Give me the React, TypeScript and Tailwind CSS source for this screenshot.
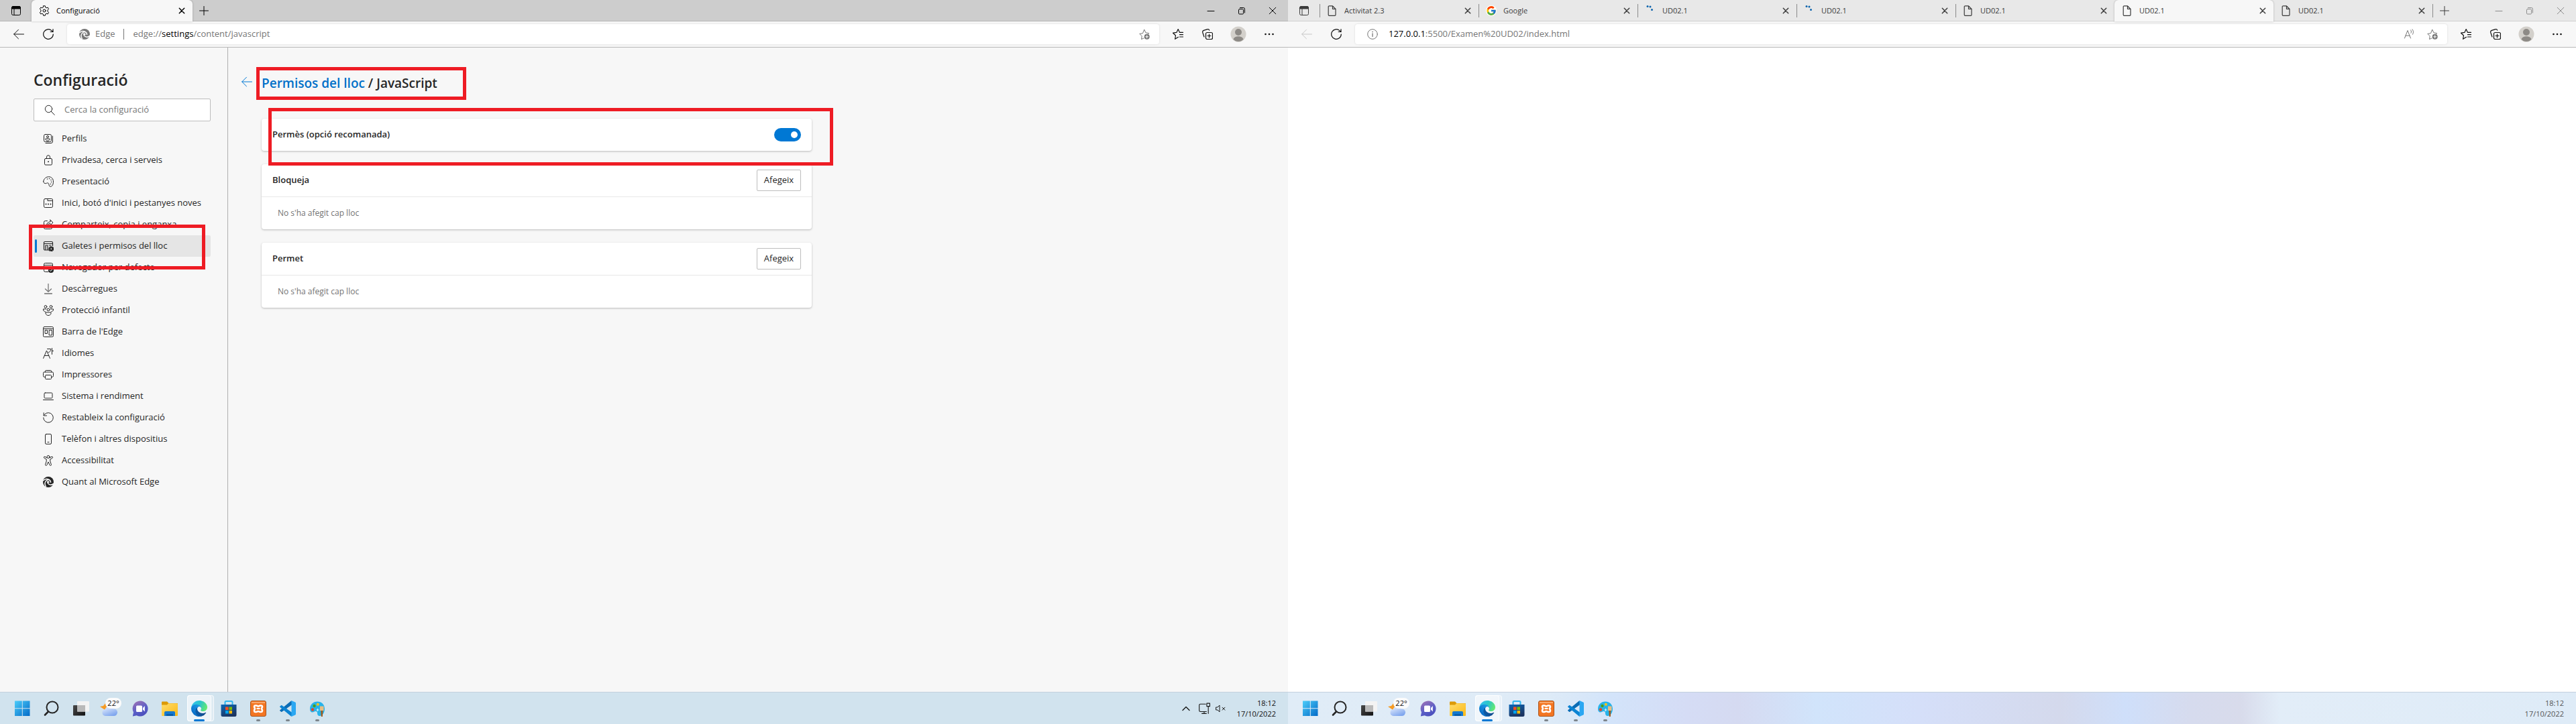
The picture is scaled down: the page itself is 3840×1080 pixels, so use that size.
import React, { useId } from "react";
import { FcGoogle } from "react-icons/fc";

type IconProps = { className?: string };

function Line({ className = "size-4", children }: IconProps & { children: React.ReactNode }) {
  return (
    <svg viewBox="0 0 16 16" className={className} fill="none" stroke="currentColor" strokeWidth="1" strokeLinecap="round" strokeLinejoin="round" aria-hidden="true">
      {children}
    </svg>
  );
}

/* ---------- browser chrome icons ---------- */

const TabActions = () => (
  <Line>
    <rect x="1.5" y="1.5" width="13" height="13" rx="2" />
    <path d="M1.5 3.5a2 2 0 0 1 2-2h9a2 2 0 0 1 2 2v1.5h-13z" fill="currentColor" />
    <path d="M5 5v9.5" />
  </Line>
);
const Gear = () => (
  <Line>
    <circle cx="8" cy="8" r="2" />
    <path d="M6.7.8h2.6l.5 2.2 1.3.8 2.2-.7 1.3 2.3-1.6 1.6v2l1.6 1.6-1.3 2.3-2.2-.7-1.3.8-.5 2.2H6.7L6.200 13l-1.300-.8-2.200.7-1.300-2.300L3 9V7L1.400 5.400l1.300-2.300 2.200.7L6.200 3z" />
  </Line>
);
const Close = ({ className = "size-4" }: IconProps) => (
  <Line className={className}>
    <path d="M4.300 4.300l7.400 7.400M11.700 4.300l-7.400 7.400" strokeWidth="1.500" />
  </Line>
);
const Plus = () => (
  <Line>
    <path d="M8 1.500v13M1.500 8h13" />
  </Line>
);
const FileIcon = () => (
  <Line>
    <path d="M3.500.8h5l4.500 4.500v8.700a1.300 1.300 0 0 1-1.300 1.300H3.500A1.300 1.300 0 0 1 2.200 14V2.100A1.300 1.300 0 0 1 3.500.8zM8.500.8v4.500H13" strokeWidth="1.200" />
  </Line>
);
const Loading = () => (
  <svg viewBox="0 0 16 16" className="size-4" fill="#0f65ad" aria-hidden="true">
    <circle cx="4" cy="1.500" r="1.500" />
    <circle cx="8" cy="2" r="1.500" />
    <circle cx="10.500" cy="6.500" r="1.500" />
  </svg>
);
const ArrowLeft = ({ className }: IconProps) => (
  <Line className={className}>
    <path d="M15.500 8H.7M7.500 1.200L.7 8l6.800 6.800" />
  </Line>
);
const Refresh = () => (
  <Line>
    <path d="M15.300 8A7.300 7.300 0 1 1 12.900 2.600L15 4.500M15 .700v3.800h-3.800" strokeWidth="1.200" />
  </Line>
);
const Swirl = () => (
  <svg viewBox="0 0 16 16" className="size-4" aria-hidden="true">
    <circle cx="8" cy="8" r="8" fill="currentColor" />
    <g fill="none" stroke="white" strokeWidth="1.400">
      <path d="M.2 6.200C2.500 3.600 5.800 3 8.500 4.200c2.200 1 3.300 2.800 3 4.800" />
      <path d="M3.300 14.600C1.900 10.800 3 7.300 5.900 5.700c1.500-.8 3.500-.700 4.800.300" transform="rotate(-12 6 9)" />
      <path d="M15.900 10.300c-2.500 2.300-5.300 2.500-7.500.700-1.600-1.300-1.900-3.200-.9-4.500" />
    </g>
    <circle cx="8.300" cy="8" r="1.300" fill="white" />
  </svg>
);
const Info = () => (
  <Line>
    <circle cx="8" cy="8" r="7.300" />
    <path d="M8 7v4.500" strokeWidth="1.300" />
    <circle cx="8" cy="4.600" r=".4" fill="currentColor" />
  </Line>
);
const StarAdd = () => (
  <Line>
    <path d="M7 14l-3.500 1.500.7-4.700L.800 7.400l4.700-.7L7.700 1l2.200 4.800 4.800.8-2 2" />
    <circle cx="11.700" cy="11.800" r="4" fill="currentColor" stroke="none" />
    <path d="M11.700 9.800v4M9.700 11.800h4" stroke="white" />
  </Line>
);
const ReadAloud = () => (
  <Line>
    <path d="M1.500 14L6 2.500 10.500 14M3 10.200h6M10.500 1.800c1.200 1.300 1.200 3 .5 4.500M13 .800c1.900 2.200 2 5 .5 7.500" />
  </Line>
);
const Favorites = () => (
  <Line>
    <path d="M8.500 12.300l-4.900 3 .9-5.300L.600 6.200l5.300-.8L8.200.600l2.300 4.800h5M10.500 8.700h5M10.500 12h5" strokeWidth="1.200" />
  </Line>
);
const Collections = () => (
  <Line>
    <rect x="5.500" y="5.500" width="10" height="10" rx="2" strokeWidth="1.200" />
    <path d="M10.500 8v5M8 10.500h5M3 12L.800 5.500C.400 4 1 2.900 2.300 2.400L8 .600c1.300-.3 2.300.300 2.700 1.500" strokeWidth="1.200" />
  </Line>
);
const Avatar = () => (
  <svg viewBox="0 0 24 24" className="size-6" aria-hidden="true">
    <circle cx="12" cy="12" r="11.500" fill="#d3d0cb" />
    <circle cx="12" cy="9" r="5" fill="#8d8a86" />
    <path d="M4.500 19.500c1-3 4-4.200 7.500-4.200s6.500 1.200 7.500 4.200C17.500 22 15 23 12 23s-5.500-1-7.500-3.500z" fill="#8d8a86" />
  </svg>
);
const Dots = () => (
  <svg viewBox="0 0 16 16" className="size-4" fill="currentColor" aria-hidden="true">
    <circle cx="2.500" cy="8" r="1.300" />
    <circle cx="8" cy="8" r="1.300" />
    <circle cx="13.500" cy="8" r="1.300" />
  </svg>
);
const Minimize = () => (
  <Line>
    <path d="M3 8.500h10" />
  </Line>
);
const Restore = () => (
  <Line>
    <rect x="3.500" y="5.500" width="7" height="7.500" rx="1.200" />
    <path d="M5.500 3.500h5a2 2 0 0 1 2 2v5.500" />
  </Line>
);
const WinClose = () => (
  <Line>
    <path d="M3.200 3.200l9.600 9.600M12.800 3.200l-9.600 9.600" />
  </Line>
);
const Search = () => (
  <Line>
    <circle cx="6.500" cy="6.500" r="5.200" />
    <path d="M10.300 10.300l5 5" />
  </Line>
);

/* ---------- settings menu ---------- */

const menu: { label: string; icon: React.ReactNode }[] = [
  {
    label: "Perfils",
    icon: (
      <Line>
        <rect x="1.500" y="1.500" width="11" height="11" rx="2" />
        <path d="M14.500 4v8a2.500 2.500 0 0 1-2.500 2.500H4" />
        <circle cx="7" cy="5" r="1.500" />
        <path d="M4 8h6v1c0 1.200-1.200 2-3 2s-3-.8-3-2z" />
      </Line>
    ),
  },
  {
    label: "Privadesa, cerca i serveis",
    icon: (
      <Line>
        <rect x="2.500" y="5.500" width="11" height="9.500" rx="1.500" />
        <path d="M5.500 5.500V3.200a2.500 2.500 0 0 1 5 0v2.300" />
        <circle cx="8" cy="10.200" r=".5" fill="currentColor" />
      </Line>
    ),
  },
  {
    label: "Presentació",
    icon: (
      <Line>
        <path d="M.700 7.500C1.500 3.200 4.800.700 8.700.700c4 0 6.800 2.900 6.800 7.300s-1.800 7.300-4.200 7.300c-3.200 0-1.600-4.300-3.500-5.200-1.700-.8-2.900 1.100-4.700.5C1.500 10.100.4 9 .7 7.500z" />
        <path d="M6.500 4h.1M9.500 3.500h.1M12 5.500h.1M12.500 8.500h.1M11.500 11.500h.1" strokeWidth="1.400" />
      </Line>
    ),
  },
  {
    label: "Inici, botó d'inici i pestanyes noves",
    icon: (
      <Line>
        <rect x="1.500" y="1.500" width="13" height="13" rx="1.800" />
        <path d="M7 1.500v3h7.500" />
        <path d="M4.500 9.500h.1M8 9.500h.1M11.500 9.500h.1" strokeWidth="1.800" />
      </Line>
    ),
  },
  {
    label: "Comparteix, copia i enganxa",
    icon: (
      <Line>
        <path d="M6.500 2.500h-3a2 2 0 0 0-2 2v8a2 2 0 0 0 2 2h8a2 2 0 0 0 2-2v-2" />
        <path d="M11 1l4 4-4 4V6.500c-2.500 0-4.500 1-6 3.500.2-3.500 2.500-6 6-6.300z" />
      </Line>
    ),
  },
  {
    label: "Galetes i permisos del lloc",
    icon: (
      <Line>
        <path d="M9 14H3a1.500 1.500 0 0 1-1.500-1.500V3A1.500 1.500 0 0 1 3 1.500h10A1.500 1.500 0 0 1 14.500 3v4.500M1.500 4.500h13M4 7h3v7H4zM9.500 7h2.500" strokeWidth="1.200" />
        <circle cx="12.300" cy="12.300" r="3" fill="currentColor" stroke="none" />
        <circle cx="12.300" cy="12.300" r="3.400" strokeDasharray="1.800 1.760" strokeWidth="1.400" />
        <circle cx="12.300" cy="12.300" r="1" fill="#e5e5e5" stroke="none" />
      </Line>
    ),
  },
  {
    label: "Navegador per defecte",
    icon: (
      <Line>
        <path d="M8 14.500H3.500a2 2 0 0 1-2-2v-9a2 2 0 0 1 2-2h9a2 2 0 0 1 2 2v4M1.500 4.500h13" />
        <circle cx="12" cy="12" r="4" fill="currentColor" stroke="none" />
        <path d="M10.200 12.200l1.300 1.300 2.500-2.800" stroke="white" />
      </Line>
    ),
  },
  {
    label: "Descàrregues",
    icon: (
      <Line>
        <path d="M8 .500v11.500M3.500 8L8 12.300 12.500 8" stroke="#777" strokeWidth="1.300" />
        <path d="M2.500 15h11" />
      </Line>
    ),
  },
  {
    label: "Protecció infantil",
    icon: (
      <Line>
        <circle cx="4" cy="2.500" r="1.900" />
        <circle cx="12" cy="2.500" r="1.900" />
        <circle cx="8" cy="7" r="1.900" />
        <path d="M4.500 6H.5v1c0 1.600 1.300 2.700 3 2.900M11.500 6h4v1c0 1.600-1.300 2.700-3 2.900M4 11h8v1.200c0 2-1.700 3.300-4 3.300s-4-1.300-4-3.300z" />
      </Line>
    ),
  },
  {
    label: "Barra de l'Edge",
    icon: (
      <Line>
        <rect x=".5" y=".5" width="15" height="15" rx="1.800" />
        <path d="M.5 3.500h15" />
        <rect x="3.500" y="5.500" width="3" height="5" />
        <rect x="9.500" y="5.500" width="4" height="7.500" />
      </Line>
    ),
  },
  {
    label: "Idiomes",
    icon: (
      <Line>
        <path d="M.600 15.500L5.500 4l5 11.500M2.300 11.500h6.500M6.500 1.500h5.200c.2 2.800-1 4.500-3.700 5.200M13.500.500v9M13.500 4.500h2" />
      </Line>
    ),
  },
  {
    label: "Impressores",
    icon: (
      <Line>
        <path d="M3.500 4V2.500a1 1 0 0 1 1-1h7a1 1 0 0 1 1 1V4M3.500 11.500h-1a2 2 0 0 1-2-2V5.500A1.500 1.500 0 0 1 2 4h12a1.500 1.500 0 0 1 1.500 1.500v4a2 2 0 0 1-2 2h-1" />
        <rect x="3.500" y="8.500" width="9" height="6" rx="1" />
      </Line>
    ),
  },
  {
    label: "Sistema i rendiment",
    icon: (
      <Line>
        <rect x="2" y="3" width="12" height="8" rx="1.300" />
        <path d="M.500 13.500h15" />
      </Line>
    ),
  },
  {
    label: "Restableix la configuració",
    icon: (
      <Line>
        <path d="M.700 8A7.300 7.300 0 1 0 2.500 3.200L1 4.800M1.200.800V5h4.300" />
      </Line>
    ),
  },
  {
    label: "Telèfon i altres dispositius",
    icon: (
      <Line>
        <rect x="3.500" y=".6" width="9" height="14.800" rx="1.500" />
        <path d="M7 12.500h2" />
      </Line>
    ),
  },
  {
    label: "Accessibilitat",
    icon: (
      <Line>
        <circle cx="8" cy="2.500" r="2" />
        <path d="M6 3.800L3 2.300C1.200 1.700.700 3.900 2.200 4.600L5.200 6v3L3.600 14c-.4 1.700 1.700 2.200 2.200.800L8 10l2.200 4.800c.5 1.400 2.600.9 2.200-.8L10.800 9V6l3-1.400c1.500-.7 1-2.900-.8-2.300l-3 1.500" />
      </Line>
    ),
  },
  { label: "Quant al Microsoft Edge", icon: <Swirl /> },
];

/* ---------- taskbar icons ---------- */

function EdgeLogo() {
  const id = useId();
  return (
    <svg viewBox="0 0 256 256" className="size-6" aria-hidden="true">
      <defs>
        <linearGradient id={id + "a"} x1="0.2" y1="0.5" x2="1" y2="0.6">
          <stop offset="0" stopColor="#0c59a4" />
          <stop offset="1" stopColor="#114a8b" />
        </linearGradient>
        <linearGradient id={id + "b"} x1="0.9" y1="0.2" x2="0.3" y2="1">
          <stop offset="0" stopColor="#1b9de2" />
          <stop offset="0.5" stopColor="#1383d8" />
          <stop offset="1" stopColor="#0667c0" />
        </linearGradient>
        <linearGradient id={id + "c"} x1="0" y1="0.3" x2="1" y2="0.6">
          <stop offset="0" stopColor="#35c1f1" />
          <stop offset="0.5" stopColor="#2cc6c8" />
          <stop offset="1" stopColor="#66eb6e" />
        </linearGradient>
      </defs>
      <g transform="translate(-4.600 -4.900)">
        <path fill={`url(#${id}a)`} d="M235.680 195.460a93.730 93.730 0 0 1-10.540 4.710 101.870 101.870 0 0 1-35.900 6.460c-47.320 0-88.540-32.550-88.540-74.320A31.480 31.480 0 0 1 117.130 105c-42.800 1.800-53.800 46.400-53.800 72.530 0 73.880 68.090 81.370 82.760 81.370 7.910 0 19.840-2.300 27-4.560l1.310-.44a128.340 128.340 0 0 0 66.600-52.800 4 4 0 0 0-5.320-5.640z" />
        <path fill={`url(#${id}b)`} d="M110.340 246.340A79.200 79.200 0 0 1 87.600 225a80.720 80.720 0 0 1 29.530-120c3.120-1.470 8.450-4.130 15.540-4a32.350 32.350 0 0 1 25.690 13 31.880 31.880 0 0 1 6.360 18.660c0-.21 24.460-79.600-80-79.600-43.900 0-80 41.660-80 78.210a130.150 130.150 0 0 0 12.110 56 128 128 0 0 0 156.380 67.110 75.550 75.550 0 0 1-62.780-8z" />
        <path fill={`url(#${id}c)`} d="M156.940 153.780c-.81 1.050-3.300 2.500-3.300 5.660 0 2.610 1.700 5.120 4.720 7.230 14.380 10 41.490 8.680 41.560 8.680a59.560 59.560 0 0 0 30.270-8.350 61.380 61.380 0 0 0 30.430-52.880c.26-22.410-8-37.310-11.340-43.910-21.190-41.450-66.930-65.290-116.670-65.290a128 128 0 0 0-128 126.200c.48-36.540 36.800-66.050 80-66.050 3.500 0 23.460.34 42 10.070 16.340 8.580 24.900 18.940 30.850 29.210 6.180 10.670 7.280 24.150 7.280 29.520s-2.740 13.330-7.800 19.910z" />
      </g>
    </svg>
  );
}

function StartLogo() {
  const id = useId();
  return (
    <svg viewBox="0 0 24 24" className="size-6" aria-hidden="true">
      <defs>
        <linearGradient id={id} gradientUnits="userSpaceOnUse" x1="0" y1="0" x2="24" y2="24">
          <stop offset="0" stopColor="#4fd0fb" />
          <stop offset="1" stopColor="#0067c6" />
        </linearGradient>
      </defs>
      <path fill={`url(#${id})`} d="M1 .5h10.800v10.800H1zM12.800.5H23.500v10.800H12.800zM1 12.300h10.800V23H1zM12.800 12.300H23.500V23H12.800z" />
    </svg>
  );
}

const TaskSearch = () => (
  <svg viewBox="0 0 24 24" className="size-6" fill="none" stroke="#262626" strokeLinecap="round" aria-hidden="true">
    <circle cx="13" cy="10" r="8.500" strokeWidth="2" />
    <path d="M6.500 17L2 21.500" strokeWidth="2.600" />
  </svg>
);

function TaskView() {
  const id = useId();
  return (
    <svg viewBox="0 0 24 24" className="size-6" aria-hidden="true">
      <defs>
        <linearGradient id={id} x1="0" y1="0" x2="1" y2="1">
          <stop offset="0" stopColor="#4a4a4a" />
          <stop offset="1" stopColor="#111" />
        </linearGradient>
      </defs>
      <rect x="0" y="7" width="18" height="15.500" rx="1" fill={`url(#${id})`} />
      <rect x="6" y="1" width="18" height="15.500" rx="1" fill="#f3f3f3" />
      <rect x="6" y="7" width="12" height="9.500" fill="#b9b9b9" />
    </svg>
  );
}

function Weather() {
  const id = useId();
  return (
    <svg viewBox="0 0 32 28" className="-mt-1 h-7 w-8" aria-hidden="true">
      <defs>
        <linearGradient id={id} x1="0" y1="0" x2="0.600" y2="1">
          <stop offset="0" stopColor="#eef4fe" />
          <stop offset="1" stopColor="#7fa6ee" />
        </linearGradient>
      </defs>
      <path d="M0 13l5-1 4-5 5 4v7l-6 4-2-5z" fill="#f59a23" />
      <path d="M8 27a5 5 0 0 1-.4-9.900 6.500 6.500 0 0 1 12.200-.6 5.300 5.300 0 1 1 .7 10.500z" fill={`url(#${id})`} />
      <rect x="8" y="0" width="24" height="16" rx="8" fill="#fbfbfb" />
      <text x="20" y="12" fontSize="11" textAnchor="middle" fill="#111" fontFamily="Open Sans, sans-serif">22°</text>
    </svg>
  );
}

function ChatLogo() {
  const id = useId();
  return (
    <svg viewBox="0 0 24 24" className="size-6" aria-hidden="true">
      <defs>
        <linearGradient id={id} x1="0.100" y1="0" x2="0.600" y2="1">
          <stop offset="0" stopColor="#a273b4" />
          <stop offset="0.600" stopColor="#5b5fc7" />
          <stop offset="1" stopColor="#4b4fbd" />
        </linearGradient>
      </defs>
      <path d="M12 .5a11.500 11.500 0 1 1-5.300 21.700L.8 23.500 2 17.500A11.500 11.500 0 0 1 12 .5z" fill={`url(#${id})`} />
      <rect x="6" y="7.500" width="9" height="9.500" rx="1.500" fill="white" />
      <path d="M16 11l2.800-3v8.500L16 13.500z" fill="white" />
    </svg>
  );
}

function FolderLogo() {
  const id = useId();
  return (
    <svg viewBox="0 0 24 24" className="size-6" aria-hidden="true">
      <defs>
        <linearGradient id={id} x1="0" y1="0" x2="1" y2="1">
          <stop offset="0" stopColor="#ffdc6b" />
          <stop offset="1" stopColor="#fbb917" />
        </linearGradient>
      </defs>
      <path d="M0 2.500a1 1 0 0 1 1-1h7l2.500 2.500H23a1 1 0 0 1 1 1v5H0z" fill="#dc9a07" />
      <path d="M0 6.500h8l2-2.300h13a1 1 0 0 1 1 1V22a1 1 0 0 1-1 1H1a1 1 0 0 1-1-1z" fill={`url(#${id})`} />
      <path d="M4 18a2 2 0 0 1 2-2h12a2 2 0 0 1 2 2v5H4z" fill="#1479cf" />
      <path d="M7 20h10v3H7z" fill="#0a5ea8" />
    </svg>
  );
}

function StoreLogo() {
  const id = useId();
  return (
    <svg viewBox="0 0 24 24" className="size-6" aria-hidden="true">
      <defs>
        <linearGradient id={id} x1="0" y1="0" x2="0.500" y2="1">
          <stop offset="0" stopColor="#0d67b8" />
          <stop offset="1" stopColor="#1c3561" />
        </linearGradient>
      </defs>
      <path d="M6.500 7V2.500A1.500 1.500 0 0 1 8 1h8a1.500 1.500 0 0 1 1.500 1.500V7" fill="none" stroke="#2fb4ee" strokeWidth="2" />
      <path d="M.5 6h23v15.500a2.500 2.500 0 0 1-2.500 2.500H3A2.500 2.500 0 0 1 .5 21.500z" fill={`url(#${id})`} />
      <path d="M7 9.500h4.500V14H7z" fill="#f25022" />
      <path d="M12.500 9.500H17V14h-4.500z" fill="#7fba00" />
      <path d="M7 15h4.500v4.500H7z" fill="#00a4ef" />
      <path d="M12.500 15H17v4.500h-4.500z" fill="#ffb900" />
    </svg>
  );
}

const XamppLogo = () => (
  <svg viewBox="0 0 24 24" className="size-6" aria-hidden="true">
    <rect x=".5" y=".5" width="23" height="23" rx="2.500" fill="#f37623" stroke="#a9561f" />
    <path d="M2 2h20v2H2z" fill="#f9a76b" />
    <path
      d="M7.500 7.500h1.500c1.500 0 2 1 3 1s1.500-1 3-1h1c1.500 0 2 1 2 2s-1 1.500-1 2.500 1 1.500 1 2.800-.8 2.200-2 2.200h-1c-1.500 0-2-1-3-1s-1.500 1-3 1H7.500c-1 0-1.500-1-1.500-2.200S7 13 7 12s-1-1.500-1-2.500.5-2 1.500-2z"
      fill="none"
      stroke="white"
      strokeWidth="2.600"
    />
    <path d="M9.500 12h5" stroke="white" strokeWidth="2.200" />
  </svg>
);

const CodeLogo = () => (
  <svg viewBox="0 0 24 24" className="size-6" aria-hidden="true">
    <path d="M.3 14.200a.8.800 0 0 0 0 1.100L2 16.800c.4.300.9.300 1.300 0L18.500 6 17.500 0z" fill="#0b6cb5" />
    <path d="M.3 9.800a.8.800 0 0 1 0-1.100L2 7.200c.4-.3.900-.3 1.300 0L18.500 18l-1 6z" fill="#0b83d3" />
    <path d="M17.500 0L23 2.500c.6.300 1 .8 1 1.500v16c0 .7-.4 1.200-1 1.500L17.500 24z" fill="#2aa7f2" />
  </svg>
);

const PaintLogo = () => (
  <svg viewBox="0 0 24 24" className="size-6" aria-hidden="true">
    <path d="M12 1.500c6.500 0 11 4.500 11 11 0 5-3 10.500-7.500 10.500-3 0-3.500-2.500-3.500-4.500 0-1.700-1-2.500-2.500-2.500-2 0-2.500 1.500-5 1.500S1 15 1 12.500C1 6 6 1.500 12 1.500z" fill="#27b3ea" />
    <circle cx="5" cy="13.500" r="2.200" fill="#d8482f" />
    <circle cx="7.500" cy="8" r="2.200" fill="#4c9f1e" />
    <circle cx="12.800" cy="5.800" r="2" fill="#fcc419" />
    <path d="M10.500 14h4M12.500 12v4" stroke="#d4f0fb" strokeWidth="1.200" />
    <path d="M16 8.500h5.500V15H16z" fill="#e9bd83" />
    <path d="M17.300 15h3l-.5 9h-2z" fill="#a05a1c" />
  </svg>
);

type Task = { name: string; icon: React.ReactNode; state?: "open" | "active" };
const tasks: Task[] = [
  { name: "Inici", icon: <StartLogo /> },
  { name: "Cerca", icon: <TaskSearch /> },
  { name: "Visualització de tasques", icon: <TaskView /> },
  { name: "El temps", icon: <Weather /> },
  { name: "Xat", icon: <ChatLogo /> },
  { name: "Explorador de fitxers", icon: <FolderLogo /> },
  { name: "Microsoft Edge", icon: <EdgeLogo />, state: "active" },
  { name: "Microsoft Store", icon: <StoreLogo /> },
  { name: "XAMPP", icon: <XamppLogo />, state: "open" },
  { name: "Visual Studio Code", icon: <CodeLogo />, state: "open" },
  { name: "Paint", icon: <PaintLogo />, state: "open" },
];

function Taskbar({ tray, background }: { tray?: boolean; background: string }) {
  return (
    <footer className={`flex h-12 shrink-0 items-stretch border-t border-[#c3d0de] pl-[11px] ${background}`}>
      {tasks.map((t) => (
        <button key={t.name} type="button" aria-label={t.name} className="relative flex w-11 items-center justify-center">
          {t.state === "active" && (
            <>
              <span className="absolute inset-y-1 left-1 right-0 rounded border border-white/70 bg-white/30" />
              <span className="absolute inset-y-1 left-1 right-1 rounded border border-white/70 bg-white/40" />
            </>
          )}
          <span className="relative">{t.icon}</span>
          {t.state === "active" && <span className="absolute bottom-1 left-3.5 h-[3px] w-4 rounded-full bg-[#0078d4]" />}
          {t.state === "open" && <span className="absolute bottom-1 h-[3px] w-1.5 rounded-full bg-[#7d858c]" />}
        </button>
      ))}
      <div className={`ml-auto flex items-center pr-[18px] ${tray ? "text-[#111]" : "text-[#555]"}`}>
        {tray && (
          <div className="mr-4 flex items-center gap-2 text-[#1a1a1a]">
            <Line>
              <path d="M3 10.500l5-5 5 5" strokeWidth="1.400" />
            </Line>
            <Line className="ml-0.5 size-[18px]">
              <path d="M10 2H3a1.500 1.500 0 0 0-1.500 1.500v7A1.500 1.500 0 0 0 3 12h8M8 12v2.500M5 14.500h6M11.500 1h4v4h-4zM13.500 5v9.500" />
            </Line>
            <Line>
              <path d="M1 6h2l3-3v10L3 10H1zM10 6.200l4 4M14 6.200l-4 4" />
            </Line>
          </div>
        )}
        <div className="text-right text-[11px] leading-4">
          <div>18:12</div>
          <div>17/10/2022</div>
        </div>
      </div>
    </footer>
  );
}

/* ---------- browser window ---------- */

type Tab = { title: string; icon: React.ReactNode; active?: boolean };

function TabStrip({ tabs, focused }: { tabs: Tab[]; focused?: boolean }) {
  const previousActive = (i: number) => i > 0 && tabs[i - 1].active;
  return (
    <div className={`flex h-8 shrink-0 items-stretch ${focused ? "bg-[#cdcdcd] text-black" : "bg-[#e8e8e8] text-[#3b3b3b]"}`}>
      <div className="flex w-[47px] shrink-0 items-center justify-center shadow-[inset_0_-1px_0_rgba(0,0,0,0.1)]">
        <button type="button" aria-label="Menú d'accions de pestanya">
          <TabActions />
        </button>
      </div>
      <div role="tablist" className="flex min-w-0">
        {tabs.map((t, i) => (
          <div
            key={i}
            role="tab"
            aria-selected={!!t.active}
            className={`relative flex min-w-0 items-center pl-[11px] pr-2 ${focused ? "w-60" : "w-[237px]"} ${
              t.active ? "rounded-t-md bg-[#f7f7f7] shadow-[0_0_3px_rgba(0,0,0,0.25)]" : "shadow-[inset_0_-1px_0_rgba(0,0,0,0.1)]"
            }`}
          >
            {!t.active && !previousActive(i) && <span className="absolute left-0 top-1.5 h-5 w-px bg-[#8a8a8a]" />}
            {t.icon}
            <span className="ml-2.5 min-w-0 flex-1 truncate text-[11px]">{t.title}</span>
            <button type="button" aria-label={`Tanca ${t.title}`}>
              <Close />
            </button>
          </div>
        ))}
      </div>
      <div className="flex flex-1 items-center shadow-[inset_0_-1px_0_rgba(0,0,0,0.1)]">
        {!focused && <span className="h-5 w-px bg-[#8a8a8a]" />}
        <button type="button" aria-label="Pestanya nova" className="ml-[9px]">
          <Plus />
        </button>
        <div className={`ml-auto flex items-center gap-[30px] pr-[15px] ${focused ? "" : "text-[#8c8c8c]"}`}>
          <button type="button" aria-label="Minimitza"><Minimize /></button>
          <button type="button" aria-label="Restaura"><Restore /></button>
          <button type="button" aria-label="Tanca"><WinClose /></button>
        </div>
      </div>
    </div>
  );
}

function Toolbar({ canGoBack, readAloud, children }: { canGoBack?: boolean; readAloud?: boolean; children: React.ReactNode }) {
  return (
    <div className="flex h-[39px] shrink-0 items-center border-b border-[#b8b8b8] bg-[#f7f7f7] pl-5 pr-5 text-[#111]">
      <button type="button" aria-label="Enrere" className={canGoBack ? "" : "text-[#c6c6c6]"}><ArrowLeft className="size-4" /></button>
      <button type="button" aria-label="Actualitza" className="ml-7"><Refresh /></button>
      <div className="ml-5 flex h-[30px] min-w-0 flex-1 items-center rounded bg-white pl-[18px] pr-3.5 text-[#767676] shadow-[0_0_3px_rgba(0,0,0,0.12)]">
        <div className="flex min-w-0 flex-1 items-center text-[13px]">{children}</div>
        {readAloud && <button type="button" aria-label="Llegeix en veu alta" className="mr-[19px]"><ReadAloud /></button>}
        <button type="button" aria-label="Afegeix als preferits"><StarAdd /></button>
      </div>
      <button type="button" aria-label="Preferits" className="ml-5"><Favorites /></button>
      <button type="button" aria-label="Col·leccions" className="ml-7"><Collections /></button>
      <button type="button" aria-label="Perfil" className="ml-[26px]"><Avatar /></button>
      <button type="button" aria-label="Configuració i més" className="ml-[26px]"><Dots /></button>
    </div>
  );
}

/* ---------- settings page ---------- */

function Highlight({ className }: { className: string }) {
  return <span aria-hidden="true" className={`pointer-events-none absolute z-10 border-[5px] border-[#ee1c24] ${className}`} />;
}

function SiteList({ title }: { title: string }) {
  return (
    <section className="rounded bg-white shadow-[0_1px_3px_rgba(0,0,0,0.25)]">
      <div className="flex h-12 items-center justify-between px-4">
        <h2 className="text-[13px] font-semibold">{title}</h2>
        <button type="button" className="h-8 w-[66px] rounded-xs border border-[#bdbdbd] text-[13px]">Afegeix</button>
      </div>
      <p className="flex h-[49px] items-center border-t border-[#e8e8e8] px-6 text-xs text-[#737373]">No s'ha afegit cap lloc</p>
    </section>
  );
}

function Settings() {
  return (
    <div className="flex flex-1 bg-[#f7f7f7] text-[#262626]">
      <aside className="w-[340px] shrink-0 border-r border-[#b0b0b0] pl-[50px] pr-[25px] pt-8">
        <h1 className="text-[23px] font-semibold leading-8">Configuració</h1>
        <label className="mt-3 flex h-[34px] items-center rounded-xs border border-[#bdbdbd] bg-white pl-[15px]">
          <Search />
          <input
            type="search"
            aria-label="Cerca la configuració"
            placeholder="Cerca la configuració"
            className="ml-3.5 min-w-0 flex-1 bg-transparent text-[13px] outline-none placeholder:text-[#767676]"
          />
        </label>
        <nav className="mt-2.5">
          {menu.map((m) => {
            const current = m.label.startsWith("Galetes");
            return (
              <a
                key={m.label}
                href="#"
                aria-current={current ? "page" : undefined}
                className={`relative flex h-8 items-center whitespace-nowrap rounded-xs pl-3.5 text-[13px] ${current ? "bg-[#e5e5e5]" : ""}`}
              >
                {current && <span className="absolute left-0.5 top-1.5 h-5 w-[3px] rounded-xs bg-[#0078d4]" />}
                {m.icon}
                <span className="ml-3">{m.label}</span>
                {current && <Highlight className="-bottom-[19px] -left-[7px] -top-4 right-2" />}
              </a>
            );
          })}
        </nav>
      </aside>
      <main className="flex flex-1 items-start pl-5 pt-[39px]">
        <a href="#" aria-label="Enrere" className="mt-1 text-[#0078d4]"><ArrowLeft className="size-4" /></a>
        <div className="ml-3.5 w-full max-w-[820px]">
          <div className="relative w-max text-[19px] font-semibold leading-7">
            <a href="#" className="text-[#0070c9]">Permisos del lloc</a> / JavaScript
            <Highlight className="-bottom-[11px] -left-2 -right-[43px] -top-2.5" />
          </div>
          <div className="mt-[39px] flex flex-col gap-5">
            <label className="relative flex h-12 items-center justify-between rounded bg-white px-4 shadow-[0_1px_3px_rgba(0,0,0,0.25)]">
              <span className="text-[13px] font-semibold">Permès (opció recomanada)</span>
              <input
                type="checkbox"
                role="switch"
                defaultChecked
                className="h-5 w-10 appearance-none rounded-full bg-[#0078d4] before:ml-[25px] before:mt-[5px] before:block before:size-2.5 before:rounded-full before:bg-white"
              />
              <Highlight className="-bottom-[22px] -right-8 -top-4 left-2.5" />
            </label>
            <SiteList title="Bloqueja" />
            <SiteList title="Permet" />
          </div>
        </div>
      </main>
    </div>
  );
}

const pageTabs: Tab[] = [
  { title: "Activitat 2.3", icon: <FileIcon /> },
  { title: "Google", icon: <FcGoogle className="size-4 rounded-full bg-white" /> },
  { title: "UD02.1", icon: <Loading /> },
  { title: "UD02.1", icon: <Loading /> },
  { title: "UD02.1", icon: <FileIcon /> },
  { title: "UD02.1", icon: <FileIcon />, active: true },
  { title: "UD02.1", icon: <FileIcon /> },
];

export default function App() {
  return (
    <div className="grid min-h-screen grid-cols-2 font-['Open_Sans','Noto_Sans',sans-serif]">
      <div className="flex min-w-0 flex-col">
        <TabStrip focused tabs={[{ title: "Configuració", icon: <Gear />, active: true }]} />
        <Toolbar canGoBack>
          <Swirl />
          <span className="ml-2">Edge</span>
          <span className="ml-3 mr-3.5 h-4 w-px bg-[#767676]" />
          <span>edge://<span className="text-black">settings</span>/content/javascript</span>
        </Toolbar>
        <Settings />
        <Taskbar tray background="bg-[#d1e3ee]" />
      </div>
      <div className="flex min-w-0 flex-col">
        <TabStrip tabs={pageTabs} />
        <Toolbar readAloud>
          <Info />
          <span className="ml-4"><span className="text-black">127.0.0.1</span>:5500/Examen%20UD02/index.html</span>
        </Toolbar>
        <main className="flex-1 bg-white" />
        <Taskbar background="bg-[linear-gradient(90deg,#e0ecf7_0%,#deebf7_20%,#d3e4fa_25%,#d5dcf5_31%,#d5daf1_35%,#d1e4fb_41%,#d5dff9_49%,#d4d9ec_60%,#cfdffa_65%,#d6dbee_70%,#d8dbeb_74%,#e2edf8_77%,#deebf7_100%)]" />
      </div>
    </div>
  );
}
